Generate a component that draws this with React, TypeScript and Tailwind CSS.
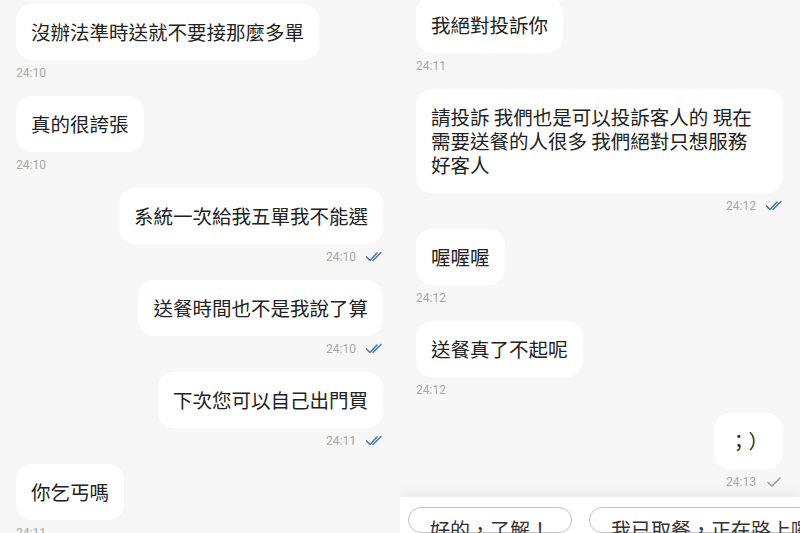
type Message = {
	lines: string[];
	time: string;
	mine?: boolean;
	status?: "sent" | "read";
};

const leftThread: Message[] = [
	{ lines: ["沒辦法準時送就不要接那麼多單"], time: "24:10" },
	{ lines: ["真的很誇張"], time: "24:10" },
	{ lines: ["系統一次給我五單我不能選"], time: "24:10", mine: true, status: "read" },
	{ lines: ["送餐時間也不是我說了算"], time: "24:10", mine: true, status: "read" },
	{ lines: ["下次您可以自己出門買"], time: "24:11", mine: true, status: "read" },
	{ lines: ["你乞丐嗎"], time: "24:11" },
];

const rightThread: Message[] = [
	{ lines: ["我絕對投訴你"], time: "24:11" },
	{
		lines: [
			"請投訴 我們也是可以投訴客人的 現在",
			"需要送餐的人很多 我們絕對只想服務",
			"好客人",
		],
		time: "24:12",
		mine: true,
		status: "read",
	},
	{ lines: ["喔喔喔"], time: "24:12" },
	{ lines: ["送餐真了不起呢"], time: "24:12" },
	{ lines: ["；）"], time: "24:13", mine: true, status: "sent" },
];

const cjk = "font-['Noto_Sans_CJK_TC','Noto_Sans',sans-serif]";

function Ticks({ status }: { status: "sent" | "read" }) {
	if (status === "sent") {
		return (
			<svg width="18" height="12" viewBox="0 0 18 12" fill="none" className="text-[#9a9a9a]">
				<path d="M3 6.5 L7 10 L15 2" stroke="currentColor" strokeWidth="1.5" strokeLinecap="round" strokeLinejoin="round" />
			</svg>
		);
	}
	return (
		<svg width="18" height="12" viewBox="0 0 18 12" fill="none" className="text-[#4a76aa]">
			<path d="M1.5 6 L5 9.5 L12 2" stroke="currentColor" strokeWidth="1.5" strokeLinecap="round" strokeLinejoin="round" />
			<path d="M8 9.5 L16 1.5" stroke="currentColor" strokeWidth="1.5" strokeLinecap="round" />
		</svg>
	);
}

function Bubble({ msg }: { msg: Message }) {
	const multi = msg.lines.length > 1;
	return (
		<div className={`flex flex-col pb-[15px] ${msg.mine ? "items-end" : "items-start"}`}>
			<div
				className={`rounded-2xl bg-white px-[15px] py-4 text-[19.5px] leading-[24px] text-[#222] whitespace-nowrap ${cjk} ${multi ? "w-full" : ""}`}
			>
				{msg.lines.map((line) => (
					<div key={line}>{line}</div>
				))}
			</div>
			<div className="mt-[5px] flex h-4 items-center gap-[9px] font-['Roboto',sans-serif] text-[12px] text-[#a8a8a8]">
				<span>{msg.time}</span>
				{msg.status && <Ticks status={msg.status} />}
			</div>
		</div>
	);
}

function Chip({ label }: { label: string }) {
	return (
		<div
			className={`shrink-0 rounded-full border border-[#c4c4c4] bg-white px-[21px] pt-[10px] pb-3 text-[20px] leading-[24px] text-[#333] whitespace-nowrap ${cjk}`}
		>
			{label}
		</div>
	);
}

export default function App() {
	return (
		<main className="flex h-[533px] w-[800px] overflow-hidden bg-[#f7f7f7]">
			<section className="h-full w-[400px] shrink-0 overflow-hidden pt-[4px] pl-4 pr-[17px]">
				{leftThread.map((m, i) => (
					<Bubble key={i} msg={m} />
				))}
			</section>

			<section className="flex h-full w-[400px] shrink-0 flex-col overflow-hidden">
				<div className="flex-1 overflow-hidden pl-4 pr-[17px]">
					<div className="-mt-[3px]">
						{rightThread.map((m, i) => (
							<Bubble key={i} msg={m} />
						))}
					</div>
				</div>
				<div className="flex h-[36px] shrink-0 gap-[17px] overflow-hidden bg-white pt-[10px] pl-2 shadow-[0_-5px_12px_rgba(0,0,0,0.05)]">
					<Chip label="好的，了解！" />
					<Chip label="我已取餐，正在路上囉" />
				</div>
			</section>
		</main>
	);
}
